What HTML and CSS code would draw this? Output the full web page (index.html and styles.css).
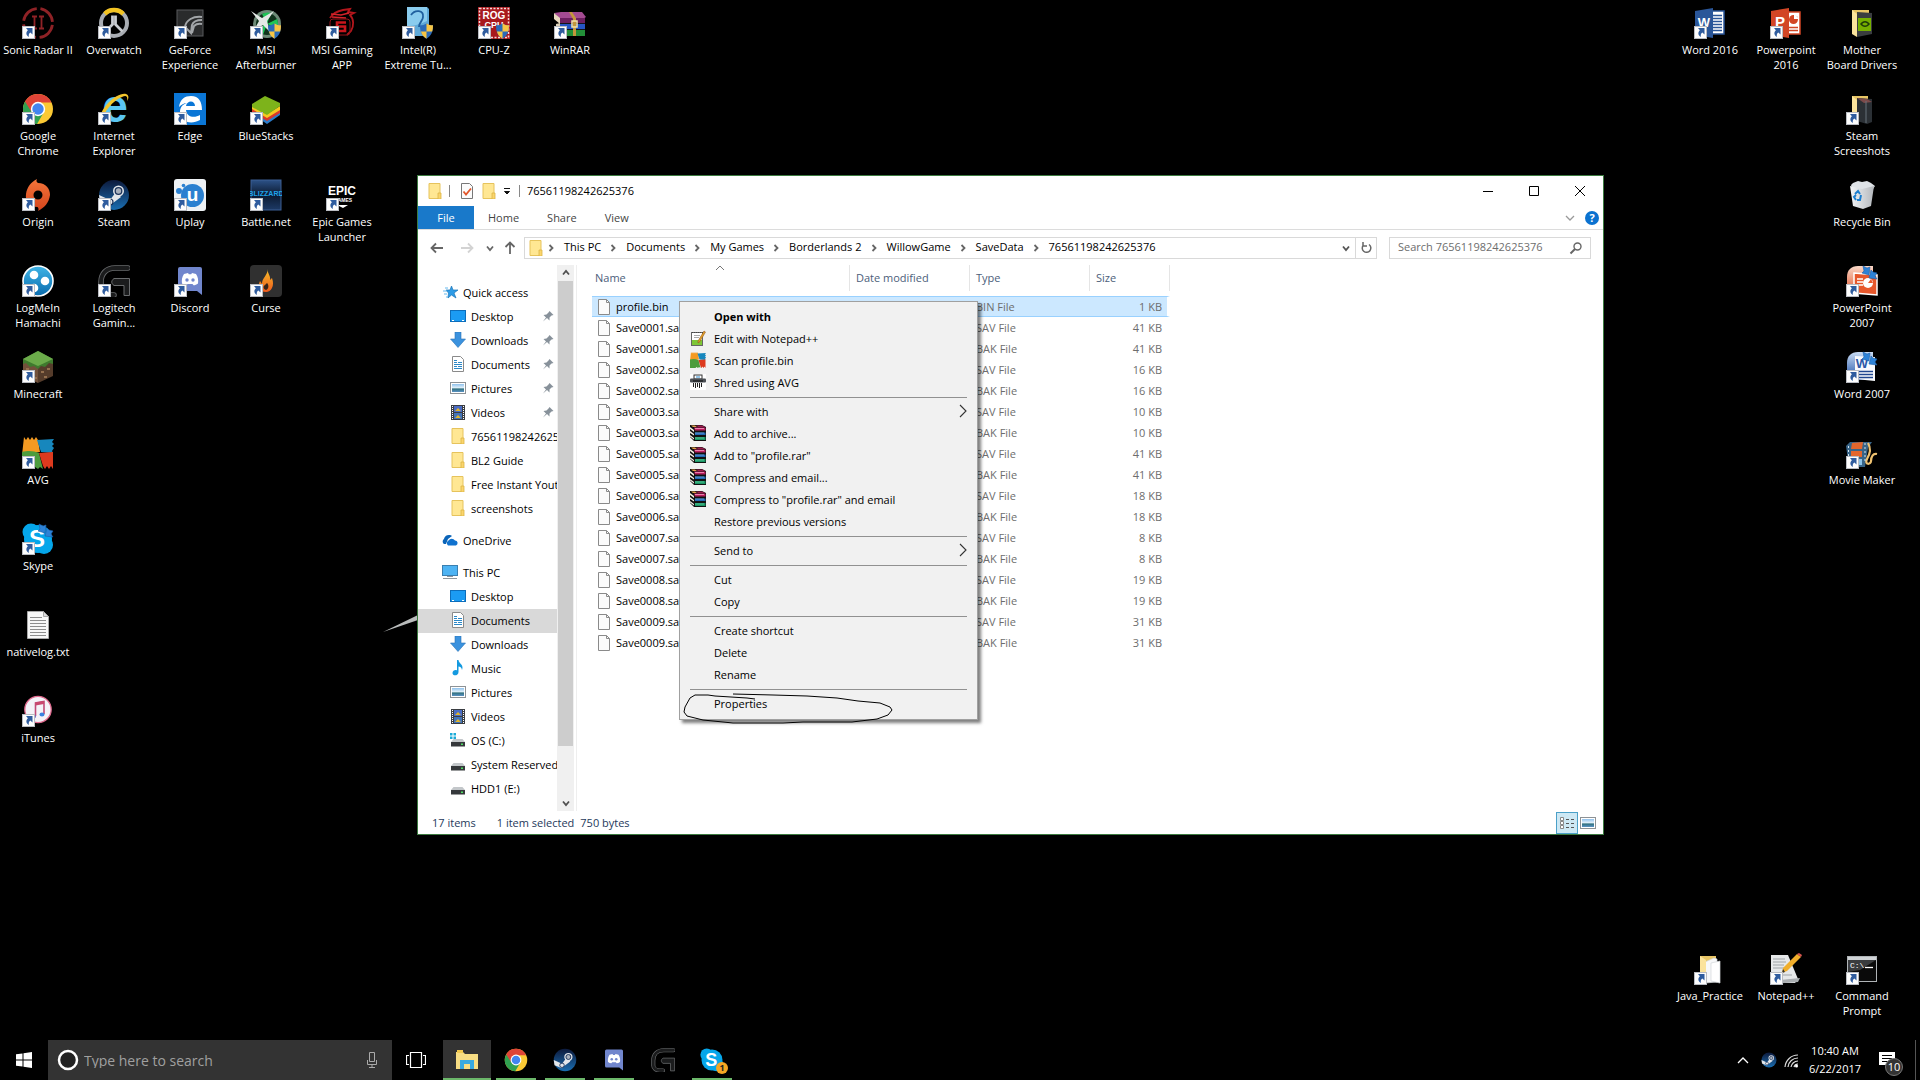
FILE: index.html
```
<!DOCTYPE html>
<html lang="en">

<head>
  <meta charset="UTF-8">
  <meta name="viewport" content="width=device-width, initial-scale=1.0">
  <title>Desktop</title>
  <link rel="stylesheet" href="styles.css">
</head>

<body>
  <!-- icon sprites -->
  <svg class="sprites" width="0" height="0" aria-hidden="true">
    <defs>
      <linearGradient id="g-steam" x1="0" y1="0" x2="0" y2="1"><stop offset="0" stop-color="#0d1a3c"/><stop offset="1" stop-color="#1a6db0"/></linearGradient>
      <linearGradient id="g-blizz" x1="0" y1="0" x2="0" y2="1"><stop offset="0" stop-color="#2c5288"/><stop offset=".5" stop-color="#0c1a30"/><stop offset="1" stop-color="#1d3a66"/></linearGradient>
      <linearGradient id="g-origin" x1="0" y1="0" x2="0" y2="1"><stop offset="0" stop-color="#f4753a"/><stop offset="1" stop-color="#d4451c"/></linearGradient>
      <linearGradient id="g-hamachi" x1="0" y1="0" x2="0" y2="1"><stop offset="0" stop-color="#3fb4e6"/><stop offset="1" stop-color="#0a6cae"/></linearGradient>
      <linearGradient id="g-flame" x1="0" y1="0" x2="0" y2="1"><stop offset="0" stop-color="#f7c02a"/><stop offset="1" stop-color="#ee5a1c"/></linearGradient>
      <linearGradient id="g-bin" x1="0" y1="0" x2="1" y2="0"><stop offset="0" stop-color="#f4f6f8"/><stop offset="1" stop-color="#b4b8bd"/></linearGradient>
      <linearGradient id="g-sky" x1="0" y1="0" x2="0" y2="1"><stop offset="0" stop-color="#8fc1ec"/><stop offset=".5" stop-color="#e6f3fb"/><stop offset=".6" stop-color="#2e6f7c"/><stop offset="1" stop-color="#5b93c4"/></linearGradient>
      <linearGradient id="g-word07" x1="0" y1="0" x2="0" y2="1"><stop offset="0" stop-color="#c9dcf4"/><stop offset="1" stop-color="#1c4fa5"/></linearGradient>
      <linearGradient id="g-ppt07" x1="0" y1="0" x2="0" y2="1"><stop offset="0" stop-color="#f9d8c8"/><stop offset="1" stop-color="#e0532a"/></linearGradient>
    </defs>

    <symbol id="badge" viewBox="0 0 32 32">
      <rect x=".5" y="19.500" width="12" height="12" fill="#fdfdfd" stroke="#b9bcc2"/>
      <path d="M4 21h6.500v6.500l-2.100-2.100c-1.500 1-1.900 2.400-1.500 4.600-3-1.700-3.300-4.700-1-6.800z" fill="#2f5c9e"/>
    </symbol>
    <symbol id="shield" viewBox="0 0 32 32">
      <path d="M24.500 16.500c2 1.300 4 1.800 6.500 1.800 0 6-1.500 10.700-6.500 13.400-5-2.700-6.500-7.400-6.500-13.400 2.500 0 4.500-.5 6.500-1.800z" fill="#2a6ab8"/>
      <path d="M24.500 16.500c2 1.300 4 1.800 6.500 1.800 0 2.400-.2 4.500-.8 6.300h-5.700zM24.500 31.700c-2.900-1.600-4.700-3.900-5.600-7.100h5.600z" fill="#f7c544"/>
    </symbol>

    <symbol id="sonic" viewBox="0 0 32 32">
      <circle cx="16" cy="16" r="14.500" fill="none" stroke="#8f2226" stroke-width="2.800" stroke-dasharray="19 3.800" stroke-dashoffset="-2"/>
      <path d="M10 9.500h5M10 21.500h5M12.500 9.500v12M17 9.500h5M17 21.500h5M19.500 9.500v12" stroke="#8f2226" stroke-width="1.800" fill="none"/>
    </symbol>
    <symbol id="overwatch" viewBox="0 0 32 32">
      <circle cx="16" cy="16" r="13" fill="none" stroke="#a9adb3" stroke-width="4"/>
      <path d="M6.800 6.800a13 13 0 0 1 18.400 0" fill="none" stroke="#f3c321" stroke-width="4.500"/>
      <path d="M14.500 8.500v9l-7 7M17.500 8.500v9l7 7" fill="none" stroke="#c9ccd1" stroke-width="2.800"/>
    </symbol>
    <symbol id="geforce" viewBox="0 0 32 32">
      <rect x="3" y="3" width="26" height="26" fill="#2a2b2c" stroke="#595b5d"/>
      <path d="M28 10c-9-1-16 3-17 10l6 6 1-8c1-3 5-5 10-5M18 26l2-7c2-2 5-2.500 8-2" fill="none" stroke="#a2a5a8" stroke-width="2"/>
    </symbol>
    <symbol id="afterburner" viewBox="0 0 32 32">
      <circle cx="17" cy="17" r="14" fill="#6e8a78"/>
      <circle cx="17" cy="17" r="11" fill="#10331c"/>
      <path d="M17 17l-5-10a11 11 0 0 1 9-1zM17 17l10-5a11 11 0 0 1 0 9zM17 17l-10 4a11 11 0 0 0 6 7z" fill="#1fc557"/>
      <path d="M1 4l11 7 12-7-7 10 3 11-7-7-9 5 5-9z" fill="#e4e9e6"/>
    </symbol>
    <symbol id="msiapp" viewBox="0 0 32 32">
      <path d="M4 11c3-5 8-7 13-8l7-1-2 3 6 1-4 2c4 4 4 11 1 16l-4 4" fill="none" stroke="#b3161c" stroke-width="1.800"/>
      <path d="M5 7l10 1 8-2M6 10l14 1" stroke="#d6232a" stroke-width="1.500" fill="none"/>
      <path d="M20 15.500h-9v4h8V24H8" fill="none" stroke="#c8161d" stroke-width="2.600"/>
      <rect x="4" y="12" width="20" height="16" rx="3" fill="none" stroke="#95141a"/>
    </symbol>
    <symbol id="intel" viewBox="0 0 32 32">
      <path d="M5 0h20l2 2v25l-2 2H5z" fill="#5fa9d8"/>
      <path d="M5 0h20v14c-8 4-14 5-20 5z" fill="#8accee"/>
      <path d="M9 8c4-6 13-5 12 2 0 4-4 5-4 10" fill="none" stroke="#1f5f9e" stroke-width="1.800"/>
    </symbol>
    <symbol id="winrar" viewBox="0 0 32 32">
      <path d="M0 6l7-1h21l4 5-3 2H6z" fill="#a44b92"/>
      <path d="M0 6l6 5v6l-6-5z" fill="#e9d9bf"/>
      <path d="M6 11h25v5H6z" fill="#6d1f60"/>
      <path d="M3 17h28v5H3z" fill="#2555c4"/>
      <path d="M3 23h28v6H5z" fill="#228f38"/>
      <path d="M6 16h25v1H6zM6 22h25v1H6z" fill="#14141c"/>
      <path d="M2 17v11l4 2V16z" fill="#dcd0b8"/>
      <path d="M18 5l4 6v18h-3V12l-4-7z" fill="#c4973c"/>
      <rect x="18" y="14" width="5" height="6" fill="none" stroke="#f6e6a8" stroke-width="1.500"/>
    </symbol>
    <symbol id="chrome" viewBox="0 0 32 32">
      <circle cx="16" cy="16" r="15" fill="#fbc934"/>
      <path d="M16 16L3 8.500A15 15 0 0 0 15 31l7-12z" fill="#30a150"/>
      <path d="M3 8.500A15 15 0 0 1 29.500 9.500H16A7 7 0 0 0 9.500 19z" fill="#df4437"/>
      <circle cx="16" cy="16" r="7.200" fill="#fff"/>
      <circle cx="16" cy="16" r="5.700" fill="#4285f0"/>
    </symbol>
    <symbol id="edge" viewBox="0 0 32 32">
      <rect width="32" height="32" fill="#0a76d6"/>
      <path d="M5 14C6 6 11 3 17 3c8 0 11 6 11 14H12c1 8 9 8 14 5v5c-9 5-20 2-20-8 0-5 3-8 7-9-3 0-6 2-8 4zm7-1h9c0-6-8-6-9 0z" fill="#fff"/>
    </symbol>
    <symbol id="bluestacks" viewBox="0 0 32 32">
      <path d="M2 18l15 9 13-8v3L17 31 2 21z" fill="#2a7bc9"/>
      <path d="M2 15l15 9 13-8v4l-13 8L2 19z" fill="#d93a2b"/>
      <path d="M2 12l15 9 13-8v4l-13 8L2 16z" fill="#f6c921"/>
      <path d="M2 11L15 3l15 7v3l-13 9L2 14z" fill="#7db31b"/>
    </symbol>
    <symbol id="origin" viewBox="0 0 32 32">
      <path d="M15 0c-1 2-.500 3 1 4 8 0 12 6 12 12-1 8-6 13-12 16 1-2 .5-3-.5-4C7 28 3 22 4 15 5 8 9 3 15 0zm1 11.500a4.500 4.500 0 1 0 0 9 4.500 4.500 0 0 0 0-9z" fill="url(#g-origin)" fill-rule="evenodd"/>
    </symbol>
    <symbol id="steam" viewBox="0 0 32 32">
      <circle cx="16" cy="16" r="15" fill="url(#g-steam)"/>
      <path d="M1 16l11 5 6-8 5 5-8 6-3 3-10-4z" fill="#e3e6ea"/>
      <circle cx="20.500" cy="12" r="5.500" fill="#e3e6ea"/>
      <circle cx="20.500" cy="12" r="3.300" fill="#a9b1bd" stroke="#1c335b" stroke-width="1.300"/>
      <circle cx="12" cy="23" r="3" fill="none" stroke="#1c335b" stroke-width="1.200"/>
    </symbol>
    <symbol id="hamachi" viewBox="0 0 32 32">
      <circle cx="16" cy="16" r="15" fill="url(#g-hamachi)" stroke="#fff" stroke-width="1.600"/>
      <circle cx="12" cy="10" r="4.300" fill="#fff"/><circle cx="23" cy="16" r="4.300" fill="#fff"/><circle cx="12" cy="23" r="4.300" fill="#fff"/>
    </symbol>
    <symbol id="logitech" viewBox="0 0 32 32">
      <path d="M30 3H17C8 3 3 9 3 17v6c0 4 4 7 9 7h4" fill="none" stroke="#6a6c6e" stroke-width="5.500" stroke-linecap="round"/>
      <path d="M30 3H17C8 3 3 9 3 17v6c0 4 4 7 9 7h4" fill="none" stroke="#1b1c1d" stroke-width="3.800" stroke-linecap="round"/>
      <path d="M16 13.500h15.500v17h-5.500v-10h-10c-3-2-3-5 0-7z" fill="#1b1c1d" stroke="#6a6c6e"/>
    </symbol>
    <symbol id="discord" viewBox="0 0 32 32">
      <path d="M6 2h20a2 2 0 0 1 2 2v26l-5-4H6a2 2 0 0 1-2-2V4a2 2 0 0 1 2-2z" fill="#7186cd"/>
      <path d="M10 9l4-1 .8 1.200h2.400L18 8l4 1c2 3 2.500 6 2 9.500-1.500 1.200-3 1.800-4.500 1.800L18.500 19h-5l-1 1.300c-1.500 0-3-.6-4.500-1.800C7.500 15 8 12 10 9z" fill="#fff"/>
      <circle cx="13" cy="15" r="1.700" fill="#7186cd"/><circle cx="19" cy="15" r="1.700" fill="#7186cd"/>
    </symbol>
    <symbol id="curse" viewBox="0 0 32 32">
      <rect width="32" height="32" rx="4" fill="#303030"/>
      <path d="M18 4c-1 5 3 6 2 11l2-2c3 8-1 14-6 14-6 0-9-5-6-11l2 3c0-6 5-8 6-15z" fill="url(#g-flame)"/>
      <path d="M17 18c2 2 2 6-1 7-3-1-3-4-1-5z" fill="#37251a"/>
    </symbol>
    <symbol id="minecraft" viewBox="0 0 32 32">
      <path d="M1 8l15 6v18L1 25z" fill="#71513b"/>
      <path d="M31 8l-15 6v18l15-7z" fill="#553c2b"/>
      <path d="M16 0l15 8v5l-4-1-4 4-4-1-3 3-4-3-4 1-4-4-3 1V8z" fill="#3f7a2e"/>
      <path d="M16 0l15 8-15 7L1 8z" fill="#6bab4a"/>
      <path d="M4 17h3v2H4zM9 21h3v2H9zM5 24h3v2H5zM19 20h3v2h-3zM25 17h3v2h-3zM22 25h3v2h-3zM13 26h2v2h-2z" fill="#94704f"/>
    </symbol>
    <symbol id="avg" viewBox="0 0 32 32">
      <path d="M2 0l2 3 2-3 2 3 2-3 2 3 2-3 2 3 2 12-9 1-9 2z" fill="#f39a22"/>
      <path d="M15 3l17-1-2 3 2 2-2 2 2 2-2 3 1 2-12-1z" fill="#1787bd"/>
      <path d="M0 15c7-2 12-1 17 1l4 16-3-2-2 2-3-2-2 2H0z" fill="#4d9c3d"/>
      <path d="M17 16l14-1v17l-2-3-2 3-2-3-2 3-2-3z" fill="#dd3a1e"/>
    </symbol>
    <symbol id="skype-cloud" viewBox="0 0 32 32">
      <circle cx="9" cy="9" r="8.500" fill="#05a6ea"/><circle cx="22" cy="22" r="9" fill="#05a6ea"/>
      <circle cx="16" cy="16" r="14" fill="#05a6ea"/>
    </symbol>
    <symbol id="arrows" viewBox="0 0 32 32">
      <path d="M17 1l4 2 3-1-1 8-7-2 2-2zM31 14l-8-1 2-8 2 2 4 1-2 3z" fill="#2d82d6" stroke="#1c5ea8" stroke-width=".6"/>
    </symbol>
    <symbol id="txt" viewBox="0 0 32 32">
      <path d="M5.500 2.500h16l5 5v22h-21z" fill="#f7f7f7" stroke="#a8a8a8"/>
      <path d="M21.500 2.500v5h5z" fill="#dadada" stroke="#a8a8a8"/>
      <path d="M8 8.500h12M8 11.500h16M8 14.500h16M8 17.500h16M8 20.500h16M8 23.500h16M8 26.500h16" stroke="#8d8d8d"/>
    </symbol>
    <symbol id="itunes" viewBox="0 0 32 32">
      <circle cx="16" cy="14.500" r="13.200" fill="#f4f2f8" stroke="#e06a8e" stroke-width="1.300"/>
      <path d="M13.500 21V8L22 6.500V19" fill="none" stroke="#c14a78" stroke-width="1.600"/><path d="M13.500 7.500L22 6v3l-8.500 1.500z" fill="#c9486f"/>
      <ellipse cx="11.500" cy="21.500" rx="2.500" ry="2" fill="#6a66c4"/><ellipse cx="20" cy="19.500" rx="2.500" ry="2" fill="#3a82e0"/>
    </symbol>
    <symbol id="drivers" viewBox="0 0 32 32">
      <path d="M6 3h17v24H6z" fill="#e8c566"/>
      <path d="M11 5l15 1v21l-15 3z" fill="#3a3d40"/>
      <path d="M12 11h13v13H12z" fill="#76b000"/>
      <path d="M14 17c3-4 7-4 10 0-3 4-7 4-10 0zm2 0c2 2 4 2 6 0-2-2-4-2-6 0z" fill="#1e3a08"/>
      <path d="M6 3l5 4v23l-5-3z" fill="#fbe39b"/>
    </symbol>
    <symbol id="shots" viewBox="0 0 32 32">
      <path d="M6 3h16v24H6z" fill="#e8c566"/>
      <path d="M11 5l15 1v23l-5 2-10-3z" fill="#2b3035"/>
      <path d="M11 5l10 1 5 3-8 1z" fill="#7b4a4a"/><path d="M20 8v22" stroke="#66707a"/>
      <path d="M6 3l5 4v23l-5-3z" fill="#fbe39b"/>
    </symbol>
    <symbol id="bin" viewBox="0 0 32 32">
      <path d="M5 6l2-2 5-2 4 1 5-1 4 2 4 3-2 3H6z" fill="#dfe3e7"/>
      <path d="M4 7l12 3 12-3-3 20-8 3-10-3z" fill="url(#g-bin)"/>
      <path d="M9 15l3-3 2 3M15 16l-1 5h-3M10 21l-2-3 2-2" fill="none" stroke="#1c7fd0" stroke-width="2"/>
    </symbol>
    <symbol id="ppt07" viewBox="0 0 32 32">
      <path d="M1 12C1 5 5 1 12 1h15v28H1z" fill="url(#g-ppt07)"/>
      <path d="M8 8l23 2v20L8 28z" fill="#e7582c" stroke="#fff" stroke-width="1.500"/>
      <path d="M11 14h6M11 17h6M11 20h6" stroke="#fff" stroke-width="1.400"/><circle cx="22" cy="18" r="5" fill="#fff"/><path d="M22 18h5l-2-4z" fill="#e7582c"/>
    </symbol>
    <symbol id="movie" viewBox="0 0 32 32">
      <path d="M0 9l4-4h22l-4 6-3 19H3z" fill="#386487"/>
      <path d="M6 6l11-1-1 7H5zM5 14h11v6H5z" fill="#e3662c"/><path d="M5 22h11v6H6z" fill="#8ec4e8"/>
      <path d="M31 17c-4-1-6 3-6 7s-7 4-4-2c3-5 4-11 1-16" fill="none" stroke="#eec170" stroke-width="2.200"/>
      <path d="M2.500 9v18M19 6v20" stroke="#d4e4ef" stroke-dasharray="2 2"/>
    </symbol>
    <symbol id="java" viewBox="0 0 32 32">
      <path d="M6 3h16v26H6z" fill="#e8c566"/>
      <path d="M11 9l9-4 3 1v23l-12 1z" fill="#f7f8f9" stroke="#d3d7da" stroke-width=".7"/>
      <path d="M17 10l9-2v22l-9-2z" fill="#fff" stroke="#d3d7da" stroke-width=".7"/>
      <path d="M6 3l6 4v24l-6-3z" fill="#fbe39b"/>
    </symbol>
    <symbol id="npp" viewBox="0 0 32 32">
      <path d="M1 2h17l10 24-3 4H1z" fill="#e6e8e9"/>
      <path d="M1 28l29-3-2 4-26 2z" fill="#a9adb0"/>
      <path d="M3 6h12M3 9h13M3 12h11M3 15h12M12 22h10" stroke="#9ea3a6"/>
      <path d="M12 20l1-5L27 1l4 3-14 14z" fill="#f0ae2b"/><path d="M27 1l2-1 3 2-1 2z" fill="#d65550"/><path d="M12 20l1-4 2 3z" fill="#333"/>
    </symbol>

    <!-- 16px icons -->
    <symbol id="s-folder" viewBox="0 0 16 16">
      <path d="M2 .5h11v15H2z" fill="#ffe793" stroke="#e6c35c"/><path d="M11 10h3v6h-3z" fill="#fbd56c" stroke="#dcb548" stroke-width=".8"/>
    </symbol>
    <symbol id="s-file" viewBox="0 0 16 16">
      <path d="M2.500.5h8l3 3v12h-11z" fill="#fbfbfb" stroke="#8a8a8a"/><path d="M10.500.5v3h3" fill="none" stroke="#8a8a8a"/>
    </symbol>
    <symbol id="s-check" viewBox="0 0 16 16">
      <path d="M2.500.5h8l3 3v12h-11z" fill="#fbfbfb" stroke="#777"/><path d="M4.500 8.500l2.500 3 5-6" fill="none" stroke="#e2562a" stroke-width="1.800"/>
    </symbol>
    <symbol id="s-star" viewBox="0 0 16 16">
      <path d="M9.500 2l1.500 4h5l-4 3 2 5-4.500-3L6 14l.5-5L4 6h4z" fill="#2d9be6" stroke="#1b76b8" stroke-width=".7"/>
      <path d="M1 7h4M3 4h3M2 10h3M4 13h2" stroke="#64b9ef"/>
    </symbol>
    <symbol id="s-desktop" viewBox="0 0 16 16">
      <rect x=".5" y="2.500" width="15" height="11" fill="#1b9bf3" stroke="#0d6dba"/><path d="M2 12.500h2M12 12.500h2" stroke="#fff"/>
    </symbol>
    <symbol id="s-down" viewBox="0 0 16 16">
      <path d="M5 0h6v7h4.500L8 15.500.500 7H5z" fill="#3b92de" stroke="#2a72b5" stroke-width=".6"/>
    </symbol>
    <symbol id="s-doc" viewBox="0 0 16 16">
      <path d="M2.500.5h8l3 3v12h-11z" fill="#fff" stroke="#8a8a8a"/>
      <path d="M4 4.500h3M4 6.500h3M8 6.500h4M4 8.500h8M4 10.500h3M8 10.500h4M4 12.500h8" stroke="#2b88c8"/>
    </symbol>
    <symbol id="s-pic" viewBox="0 0 16 16">
      <rect x=".5" y="2.500" width="15" height="11" fill="#fff" stroke="#8d9296"/><rect x="2" y="4" width="12" height="8" fill="url(#g-sky)"/>
    </symbol>
    <symbol id="s-video" viewBox="0 0 16 16">
      <rect x="1" y="1" width="14" height="15" fill="#3a3d42"/><rect x="4" y="2" width="8" height="6" fill="#4a6cc4"/><rect x="4" y="9" width="8" height="6" fill="#4374b8"/>
      <path d="M5 7l3-3 3 3zM5 14l3-3 3 3z" fill="#e0b42c"/><path d="M2.500 2v13M13.500 2v13" stroke="#fff" stroke-dasharray="1 1"/>
    </symbol>
    <symbol id="s-pin" viewBox="0 0 16 16">
      <path d="M9.500 3l4 4-2 .5-2 2v3l-2.500-2.500L3 13.500 6 9.500 3.500 7l3-.5 2-2z" fill="#87919a"/>
    </symbol>
    <symbol id="s-cloud" viewBox="0 0 16 16">
      <path d="M2 12a3 3 0 0 1 0-5 5 5 0 0 1 8-3l-4 3-2 5z" fill="#0b64b8"/><path d="M6 13.500a3 3 0 0 1 .5-5 4 4 0 0 1 6.500 0 2.600 2.600 0 0 1 1 5z" fill="#1072cf"/>
    </symbol>
    <symbol id="s-pc" viewBox="0 0 16 16">
      <rect x=".5" y="1.500" width="15" height="10" fill="#4db3f3" stroke="#3a7fb0"/><path d="M1 14.500h14M5 12.500h6" stroke="#8f979d"/>
    </symbol>
    <symbol id="s-music" viewBox="0 0 16 16">
      <path d="M7 0h1.500c.5 4 5.500 4 3.500 10-.5-3-2-3.500-3.500-3.500V12c0 4-6 4.500-6 1 0-2.500 3-3.500 4.500-2.500z" fill="#149ae0"/>
    </symbol>
    <symbol id="s-drive" viewBox="0 0 16 16">
      <path d="M3.500 7h9l2.500 3H1z" fill="#c3c7ca"/><rect x="1" y="10" width="14" height="4.500" fill="#35383b"/><rect x="11" y="11.500" width="2" height="1.500" fill="#4fdc62"/>
    </symbol>
    <symbol id="s-os" viewBox="0 0 16 16">
      <use href="#s-drive"/><path d="M0 1h2.500v2.500H0zM3.500 1H6v2.500H3.500zM0 4.500h2.500V7H0zM3.500 4.500H6V7H3.500z" fill="#1cabd8"/>
    </symbol>
    <symbol id="s-rar" viewBox="0 0 16 16">
      <path d="M0 0h12l4 2v14H4l-4-4z" fill="#111"/>
      <path d="M4 2.500h11.500v3H5z" fill="#b81f5e"/><path d="M5 3.500h9" stroke="#ee7fae"/>
      <path d="M5 7.500h10.500v2.500H5z" fill="#2368b4"/><path d="M5 8h9" stroke="#7cb6ea" stroke-width=".7"/>
      <path d="M5 12h10.500v3H5z" fill="#1a9464"/><path d="M5 13h9" stroke="#6fd8ab" stroke-width=".7"/>
      <path d="M0 2l4 3v2L0 4zM0 6l4 3v1.500L0 8zM0 10l4 3v1.500l-4-3z" fill="#f5f0e6"/><path d="M1 .5h4l2 1.500H3z" fill="#e3a04c"/><path d="M6 .5h6l3 1.500H8z" fill="#9c1c4e"/>
    </symbol>
    <symbol id="s-npp" viewBox="0 0 16 16">
      <rect x="1.500" y="2.500" width="11" height="13" fill="#fff" stroke="#666"/><rect x="2" y="10" width="10" height="5" fill="#7ec636"/>
      <path d="M2 2.500h11" stroke="#444" stroke-dasharray="1 1"/><path d="M4 5.500h6M4 7.500h5" stroke="#aaa"/><path d="M8 11l6-10 1.500 1L10 11.500 8 13z" fill="#e0a128" stroke="#8c4a1c" stroke-width=".5"/>
    </symbol>
    <symbol id="s-shred" viewBox="0 0 16 16">
      <rect width="16" height="16" fill="#fff"/><rect x="4" y="1" width="8" height="4" fill="#fff" stroke="#333"/><path d="M6 3h4" stroke="#2b8bd0"/>
      <rect x="0" y="4.500" width="16" height="4" rx="1" fill="#4b4f54"/><path d="M3 7h10" stroke="#111"/>
      <path d="M3.500 9v4M5.500 9v5M7.500 9v4M9.500 9v5M11.500 9v4" stroke="#222"/>
    </symbol>
    <symbol id="s-left" viewBox="0 0 16 16"><path d="M14 8H3M7 3.500L2.500 8 7 12.500" fill="none" stroke="currentColor" stroke-width="1.800"/></symbol>
    <symbol id="s-chev" viewBox="0 0 16 16"><path d="M6 5l3 3-3 3" fill="none" stroke="#666" stroke-width="1.800"/></symbol>
    <symbol id="s-vee" viewBox="0 0 16 16"><path d="M5 6.500l3 3.500 3-3.500" fill="none" stroke="currentColor" stroke-width="1.800"/></symbol>
    <symbol id="s-sub" viewBox="0 0 16 16"><path d="M5 2l6 6-6 6" fill="none" stroke="#333" stroke-width="1.100"/></symbol>
  </svg>

  <main class="desktop">
    <div class="shortcuts">
      <div class="shortcut-row">
        <a class="shortcut" href="#"><svg><use href="#sonic"/><use href="#badge"/></svg>Sonic Radar II</a>
        <a class="shortcut" href="#"><svg><use href="#overwatch"/><use href="#badge"/></svg>Overwatch</a>
        <a class="shortcut" href="#"><svg><use href="#geforce"/><use href="#badge"/></svg>GeForce<br>Experience</a>
        <a class="shortcut" href="#"><svg><use href="#afterburner"/><use href="#badge"/><use href="#shield"/></svg>MSI<br>Afterburner</a>
        <a class="shortcut" href="#"><svg><use href="#msiapp"/><use href="#badge"/></svg>MSI Gaming<br>APP</a>
        <a class="shortcut" href="#"><svg><use href="#intel"/><use href="#badge"/><use href="#shield"/></svg>Intel(R)<br>Extreme Tu...</a>
        <a class="shortcut" href="#">
          <svg viewBox="0 0 32 32">
            <rect width="32" height="32" fill="#a8191d"/>
            <rect x="1.500" y="1.500" width="29" height="29" fill="none" stroke="#f3dada" stroke-width="1.500" stroke-dasharray="2 1.500"/>
            <text x="16" y="12" class="logo-text" font-size="10" fill="#fff" text-anchor="middle">ROG</text>
            <text x="16" y="21" class="logo-text" font-size="9" fill="#fff" text-anchor="middle">CPU</text>
            <use href="#badge"/><use href="#shield"/>
          </svg>CPU-Z</a>
        <a class="shortcut" href="#"><svg><use href="#winrar"/><use href="#badge"/></svg>WinRAR</a>
      </div>
      <div class="shortcut-row">
        <a class="shortcut" href="#"><svg><use href="#chrome"/><use href="#badge"/></svg>Google<br>Chrome</a>
        <a class="shortcut" href="#">
          <svg viewBox="0 0 32 32">
            <text x="17" y="29" class="logo-text" font-size="46" fill="#5ac6f2" text-anchor="middle">e</text>
            <path d="M3 29C-2 20 17-1 28 1c3 1 3 4 1 7 1-5-1-6-5-4C14 8 6 19 3 29z" fill="#f3c52c"/>
            <use href="#badge"/>
          </svg>Internet<br>Explorer</a>
        <a class="shortcut" href="#"><svg><use href="#edge"/><use href="#badge"/></svg>Edge</a>
        <a class="shortcut" href="#"><svg><use href="#bluestacks"/><use href="#badge"/></svg>BlueStacks</a>
      </div>
      <div class="shortcut-row">
        <a class="shortcut" href="#"><svg><use href="#origin"/><use href="#badge"/></svg>Origin</a>
        <a class="shortcut" href="#"><svg><use href="#steam"/><use href="#badge"/></svg>Steam</a>
        <a class="shortcut" href="#">
          <svg viewBox="0 0 32 32">
            <rect width="32" height="32" rx="3" fill="#eef2f5"/>
            <circle cx="18.500" cy="16.500" r="11.500" fill="#2a80d0"/>
            <circle cx="5" cy="12" r="3" fill="#2a80d0"/><circle cx="9.500" cy="6.500" r="1.800" fill="#2a80d0"/>
            <text x="18.500" y="22" class="logo-text" font-size="19" fill="#fff" text-anchor="middle">u</text>
            <use href="#badge"/>
          </svg>Uplay</a>
        <a class="shortcut" href="#">
          <svg viewBox="0 0 32 32">
            <rect x="1" y="1" width="30" height="30" fill="url(#g-blizz)" stroke="#3c5e93"/>
            <text x="16" y="17" class="narrow-text" font-size="7" fill="#1fa3ec" text-anchor="middle">BLIZZARD</text>
            <use href="#badge"/>
          </svg>Battle.net</a>
        <a class="shortcut" href="#">
          <svg viewBox="0 0 32 32">
            <text x="16" y="16" class="narrow-text" font-size="12" fill="#fff" text-anchor="middle">EPIC</text>
            <text x="17" y="23" class="logo-text" font-size="5" fill="#fff" text-anchor="middle">GAMES</text>
            <path d="M11 26h11l-5 3z" fill="#fff"/>
            <use href="#badge"/>
          </svg>Epic Games<br>Launcher</a>
      </div>
      <div class="shortcut-row">
        <a class="shortcut" href="#"><svg><use href="#hamachi"/><use href="#badge"/></svg>LogMeIn<br>Hamachi</a>
        <a class="shortcut" href="#"><svg><use href="#logitech"/><use href="#badge"/></svg>Logitech<br>Gamin...</a>
        <a class="shortcut" href="#"><svg><use href="#discord"/><use href="#badge"/></svg>Discord</a>
        <a class="shortcut" href="#"><svg><use href="#curse"/><use href="#badge"/></svg>Curse</a>
      </div>
      <div class="shortcut-row"><a class="shortcut" href="#"><svg><use href="#minecraft"/><use href="#badge"/></svg>Minecraft</a></div>
      <div class="shortcut-row"><a class="shortcut" href="#"><svg><use href="#avg"/><use href="#badge"/></svg>AVG</a></div>
      <div class="shortcut-row">
        <a class="shortcut" href="#">
          <svg viewBox="0 0 32 32">
            <use href="#skype-cloud"/>
            <text x="15" y="24" class="logo-text" font-size="24" fill="#fff" text-anchor="middle">S</text>
            <use href="#arrows"/><use href="#badge"/>
          </svg>Skype</a>
      </div>
      <div class="shortcut-row"><a class="shortcut" href="#"><svg><use href="#txt"/></svg>nativelog.txt</a></div>
      <div class="shortcut-row"><a class="shortcut" href="#"><svg><use href="#itunes"/><use href="#badge"/></svg>iTunes</a></div>
    </div>

    <div class="shortcuts shortcuts-right">
      <div class="shortcut-row">
        <a class="shortcut" href="#">
          <svg viewBox="0 0 32 32">
            <path d="M18 4h12v23H18z" fill="#fff" stroke="#2a5699" stroke-width="1.500"/>
            <path d="M19 8.500h9M19 11.500h9M19 14.500h9M19 17.500h9M19 20.500h9M19 23.500h9" stroke="#2a5699" stroke-width="1.400"/>
            <path d="M1 4l18-3v30L1 28z" fill="#2a5699"/>
            <text x="10" y="20" class="logo-text" font-size="13" fill="#fff" text-anchor="middle">W</text>
            <use href="#badge"/>
          </svg>Word 2016</a>
        <a class="shortcut" href="#">
          <svg viewBox="0 0 32 32">
            <path d="M18 5h12v22H18z" fill="#fff" stroke="#d24625" stroke-width="1.500"/>
            <path d="M19 20.500h9M19 23.500h9" stroke="#d24625" stroke-width="1.400"/>
            <circle cx="23.500" cy="12.500" r="4.500" fill="#d24625"/><path d="M24 12V6l5 6z" fill="#fff"/>
            <path d="M1 4l18-3v30L1 28z" fill="#d24625"/>
            <text x="10" y="20" class="logo-text" font-size="15" fill="#fff" text-anchor="middle">P</text>
            <use href="#badge"/>
          </svg>Powerpoint<br>2016</a>
        <a class="shortcut" href="#"><svg><use href="#drivers"/></svg>Mother<br>Board Drivers</a>
      </div>
      <div class="shortcut-row"><a class="shortcut" href="#"><svg><use href="#shots"/><use href="#badge"/></svg>Steam<br>Screeshots</a></div>
      <div class="shortcut-row"><a class="shortcut" href="#"><svg><use href="#bin"/></svg>Recycle Bin</a></div>
      <div class="shortcut-row"><a class="shortcut" href="#"><svg><use href="#ppt07"/><use href="#arrows"/><use href="#badge"/></svg>PowerPoint<br>2007</a></div>
      <div class="shortcut-row">
        <a class="shortcut" href="#">
          <svg viewBox="0 0 32 32">
            <path d="M1 12C1 5 5 1 12 1h15v28H1z" fill="url(#g-word07)"/>
            <path d="M9 5l20 1v24L9 28z" fill="#f8fafd"/>
            <text x="16" y="17" class="logo-text" font-size="13" fill="#2b58a8" text-anchor="middle">W</text>
            <path d="M12 20.500h15M12 23.500h15M12 26.500h15" stroke="#1f4690" stroke-width="1.500"/>
            <use href="#arrows"/><use href="#badge"/>
          </svg>Word 2007</a>
      </div>
      <div class="shortcut-row"><a class="shortcut" href="#"><svg><use href="#movie"/><use href="#badge"/></svg>Movie Maker</a></div>
      <div class="shortcut-row last-row">
        <a class="shortcut" href="#"><svg><use href="#java"/><use href="#badge"/></svg>Java_Practice</a>
        <a class="shortcut" href="#"><svg><use href="#npp"/><use href="#badge"/></svg>Notepad++</a>
        <a class="shortcut" href="#">
          <svg viewBox="0 0 32 32">
            <rect x="1.500" y="3.500" width="29" height="25" fill="#0a0a0a" stroke="#b0b4b7"/>
            <path d="M2 4h28v3H2z" fill="#cfd3d6"/>
            <path d="M2 7h28L14 17 2 19z" fill="#3a3c3e"/>
            <text x="4" y="15" class="mono-text" font-size="8" fill="#fff">C:\</text>
            <path d="M19 14.500h8" stroke="#fff" stroke-width="1.300"/>
            <use href="#badge"/>
          </svg>Command<br>Prompt</a>
      </div>
    </div>

    <!-- wallpaper streak -->
    <svg class="streak" viewBox="0 0 36 18"><path d="M1 17L36 0v5z" fill="#b9bcbc"/></svg>

    <section class="window">
      <div class="titlebar">
        <svg class="ico"><use href="#s-folder"/></svg>
        <span class="bar"></span>
        <svg class="ico"><use href="#s-check"/></svg>
        <svg class="ico"><use href="#s-folder"/></svg>
        <svg class="quick-drop" viewBox="0 0 8 8"><path d="M1 1.500h6M1.500 4.500h5L4 7z" stroke="#111" fill="#111"/></svg>
        <span class="bar"></span>
        <span class="title">76561198242625376</span>
        <div class="caption">
          <button aria-label="Minimize"><svg viewBox="0 0 10 10"><path d="M0 5.500h10"/></svg></button>
          <button aria-label="Maximize"><svg viewBox="0 0 10 10"><path d="M.5.5h9v9h-9z"/></svg></button>
          <button aria-label="Close"><svg viewBox="0 0 10 10"><path d="M0 0l10 10M10 0L0 10"/></svg></button>
        </div>
      </div>

      <div class="ribbon">
        <button class="tab tab-file">File</button>
        <button class="tab">Home</button>
        <button class="tab">Share</button>
        <button class="tab">View</button>
        <svg class="ribbon-drop" viewBox="0 0 10 10"><path d="M1 3l4 4 4-4" fill="none" stroke="#999" stroke-width="1.300"/></svg>
        <button class="help" aria-label="Help">?</button>
      </div>

      <div class="address-row">
        <button class="go" aria-label="Back"><svg class="ico"><use href="#s-left"/></svg></button>
        <button class="go go-off" aria-label="Forward"><svg class="ico flip"><use href="#s-left"/></svg></button>
        <button class="go go-small" aria-label="Recent"><svg class="ico"><use href="#s-vee"/></svg></button>
        <button class="go go-up" aria-label="Up"><svg class="ico up"><use href="#s-left"/></svg></button>
        <div class="address">
          <svg class="ico"><use href="#s-folder"/></svg>
          <svg class="chev"><use href="#s-chev"/></svg><a href="#">This PC</a>
          <svg class="chev"><use href="#s-chev"/></svg><a href="#">Documents</a>
          <svg class="chev"><use href="#s-chev"/></svg><a href="#">My Games</a>
          <svg class="chev"><use href="#s-chev"/></svg><a href="#">Borderlands 2</a>
          <svg class="chev"><use href="#s-chev"/></svg><a href="#">WillowGame</a>
          <svg class="chev"><use href="#s-chev"/></svg><a href="#">SaveData</a>
          <svg class="chev"><use href="#s-chev"/></svg><a href="#">76561198242625376</a>
          <button class="addr-drop" aria-label="Previous locations"><svg class="ico"><use href="#s-vee"/></svg></button>
          <button class="refresh" aria-label="Refresh"><svg class="ico" viewBox="0 0 16 16"><path d="M11 4.500A4.300 4.300 0 1 1 5.500 5M5 2v4h4" fill="none" stroke="#666" stroke-width="1.500"/></svg></button>
        </div>
        <div class="search">
          <input type="text" aria-label="Search folder" placeholder="Search 76561198242625376">
          <svg class="ico" viewBox="0 0 16 16"><circle cx="9.500" cy="6.500" r="3.500" fill="none" stroke="#666" stroke-width="1.400"/><path d="M7 9l-4.500 4.500" stroke="#666" stroke-width="2"/></svg>
        </div>
      </div>

      <div class="panes">
        <nav class="tree">
          <a class="root" href="#"><svg class="ico"><use href="#s-star"/></svg>Quick access</a>
          <a href="#"><svg class="ico"><use href="#s-desktop"/></svg>Desktop<svg class="pin"><use href="#s-pin"/></svg></a>
          <a href="#"><svg class="ico"><use href="#s-down"/></svg>Downloads<svg class="pin"><use href="#s-pin"/></svg></a>
          <a href="#"><svg class="ico"><use href="#s-doc"/></svg>Documents<svg class="pin"><use href="#s-pin"/></svg></a>
          <a href="#"><svg class="ico"><use href="#s-pic"/></svg>Pictures<svg class="pin"><use href="#s-pin"/></svg></a>
          <a href="#"><svg class="ico"><use href="#s-video"/></svg>Videos<svg class="pin"><use href="#s-pin"/></svg></a>
          <a href="#"><svg class="ico"><use href="#s-folder"/></svg>76561198242625376</a>
          <a href="#"><svg class="ico"><use href="#s-folder"/></svg>BL2 Guide</a>
          <a href="#"><svg class="ico"><use href="#s-folder"/></svg>Free Instant Youtube</a>
          <a href="#"><svg class="ico"><use href="#s-folder"/></svg>screenshots</a>
          <a class="root spaced" href="#"><svg class="ico"><use href="#s-cloud"/></svg>OneDrive</a>
          <a class="root spaced" href="#"><svg class="ico"><use href="#s-pc"/></svg>This PC</a>
          <a href="#"><svg class="ico"><use href="#s-desktop"/></svg>Desktop</a>
          <a class="current" href="#"><svg class="ico"><use href="#s-doc"/></svg>Documents</a>
          <a href="#"><svg class="ico"><use href="#s-down"/></svg>Downloads</a>
          <a href="#"><svg class="ico"><use href="#s-music"/></svg>Music</a>
          <a href="#"><svg class="ico"><use href="#s-pic"/></svg>Pictures</a>
          <a href="#"><svg class="ico"><use href="#s-video"/></svg>Videos</a>
          <a href="#"><svg class="ico"><use href="#s-os"/></svg>OS (C:)</a>
          <a href="#"><svg class="ico"><use href="#s-drive"/></svg>System Reserved</a>
          <a href="#"><svg class="ico"><use href="#s-drive"/></svg>HDD1 (E:)</a>
        </nav>
        <div class="scrollbar">
          <svg class="ico up-vee"><use href="#s-vee"/></svg>
          <div class="thumb"></div>
          <svg class="ico"><use href="#s-vee"/></svg>
        </div>
        <div class="files">
          <table>
            <colgroup><col class="col-name"><col class="col-date"><col class="col-type"><col class="col-size"></colgroup>
            <thead>
              <tr>
                <th>Name<svg class="sort" viewBox="0 0 10 6"><path d="M1 5l4-4 4 4" fill="none" stroke="#777"/></svg></th>
                <th>Date modified</th>
                <th>Type</th>
                <th>Size</th>
              </tr>
            </thead>
            <tbody>
              <tr class="selected"><td><svg class="ico"><use href="#s-file"/></svg>profile.bin</td><td></td><td>BIN File</td><td>1 KB</td></tr>
              <tr><td><svg class="ico"><use href="#s-file"/></svg>Save0001.sav</td><td></td><td>SAV File</td><td>41 KB</td></tr>
              <tr><td><svg class="ico"><use href="#s-file"/></svg>Save0001.sav.bak</td><td></td><td>BAK File</td><td>41 KB</td></tr>
              <tr><td><svg class="ico"><use href="#s-file"/></svg>Save0002.sav</td><td></td><td>SAV File</td><td>16 KB</td></tr>
              <tr><td><svg class="ico"><use href="#s-file"/></svg>Save0002.sav.bak</td><td></td><td>BAK File</td><td>16 KB</td></tr>
              <tr><td><svg class="ico"><use href="#s-file"/></svg>Save0003.sav</td><td></td><td>SAV File</td><td>10 KB</td></tr>
              <tr><td><svg class="ico"><use href="#s-file"/></svg>Save0003.sav.bak</td><td></td><td>BAK File</td><td>10 KB</td></tr>
              <tr><td><svg class="ico"><use href="#s-file"/></svg>Save0005.sav</td><td></td><td>SAV File</td><td>41 KB</td></tr>
              <tr><td><svg class="ico"><use href="#s-file"/></svg>Save0005.sav.bak</td><td></td><td>BAK File</td><td>41 KB</td></tr>
              <tr><td><svg class="ico"><use href="#s-file"/></svg>Save0006.sav</td><td></td><td>SAV File</td><td>18 KB</td></tr>
              <tr><td><svg class="ico"><use href="#s-file"/></svg>Save0006.sav.bak</td><td></td><td>BAK File</td><td>18 KB</td></tr>
              <tr><td><svg class="ico"><use href="#s-file"/></svg>Save0007.sav</td><td></td><td>SAV File</td><td>8 KB</td></tr>
              <tr><td><svg class="ico"><use href="#s-file"/></svg>Save0007.sav.bak</td><td></td><td>BAK File</td><td>8 KB</td></tr>
              <tr><td><svg class="ico"><use href="#s-file"/></svg>Save0008.sav</td><td></td><td>SAV File</td><td>19 KB</td></tr>
              <tr><td><svg class="ico"><use href="#s-file"/></svg>Save0008.sav.bak</td><td></td><td>BAK File</td><td>19 KB</td></tr>
              <tr><td><svg class="ico"><use href="#s-file"/></svg>Save0009.sav</td><td></td><td>SAV File</td><td>31 KB</td></tr>
              <tr><td><svg class="ico"><use href="#s-file"/></svg>Save0009.sav.bak</td><td></td><td>BAK File</td><td>31 KB</td></tr>
            </tbody>
          </table>
        </div>
      </div>

      <div class="status">
        <span class="count">17 items</span>
        <span>1 item selected</span>
        <span>750 bytes</span>
        <div class="views">
          <button class="view view-on" aria-label="Details"><svg class="ico" viewBox="0 0 16 16"><path d="M1.500 2.500h3v3h-3zM1.500 6.500h3v3h-3zM1.500 10.500h3v3h-3z" fill="#fff" stroke="#888"/><path d="M7 4.500h3M12 4.500h3M7 8.500h3M12 8.500h3M7 12.500h3M12 12.500h3" stroke="#555"/></svg></button>
          <button class="view" aria-label="Large icons"><svg class="ico"><use href="#s-pic"/></svg></button>
        </div>
      </div>
    </section>

    <div class="menu">
      <button><span class="slot"></span><b>Open with</b></button>
      <button><svg class="ico"><use href="#s-npp"/></svg>Edit with Notepad++</button>
      <button><svg class="ico"><use href="#avg"/></svg>Scan profile.bin</button>
      <button><svg class="ico"><use href="#s-shred"/></svg>Shred using AVG</button>
      <hr>
      <button><span class="slot"></span>Share with<svg class="sub"><use href="#s-sub"/></svg></button>
      <button><svg class="ico"><use href="#s-rar"/></svg>Add to archive...</button>
      <button><svg class="ico"><use href="#s-rar"/></svg>Add to "profile.rar"</button>
      <button><svg class="ico"><use href="#s-rar"/></svg>Compress and email...</button>
      <button><svg class="ico"><use href="#s-rar"/></svg>Compress to "profile.rar" and email</button>
      <button><span class="slot"></span>Restore previous versions</button>
      <hr>
      <button><span class="slot"></span>Send to<svg class="sub"><use href="#s-sub"/></svg></button>
      <hr>
      <button><span class="slot"></span>Cut</button>
      <button><span class="slot"></span>Copy</button>
      <hr>
      <button><span class="slot"></span>Create shortcut</button>
      <button><span class="slot"></span>Delete</button>
      <button><span class="slot"></span>Rename</button>
      <hr>
      <button><span class="slot"></span>Properties</button>
      <!-- pen circle around Properties -->
      <svg class="scribble" viewBox="0 0 212 32"><path d="M51 2L91 3l34 1 30 2 21 3 22 2 10 4 2 3-4 5-11 4-25 3h-49l-20 1H51l-30-3-16-4-3-4 1-5 5-9 5-3h13l7 1 32 2 8 1"/></svg>
    </div>
  </main>

  <footer class="taskbar">
    <button class="start" aria-label="Start"><svg viewBox="0 0 16 16"><path d="M0 2.300L6.500 1.400v6.100H0zM7.500 1.200L16 0v7.500H7.500zM0 8.500h6.500v6.100L0 13.700zM7.500 8.500H16V16l-8.500-1.200z" fill="#fff"/></svg></button>
    <div class="cortana">
      <svg class="ring" viewBox="0 0 22 22"><circle cx="11" cy="11" r="9" fill="#222" stroke="#fff" stroke-width="2.500"/></svg>
      <input type="text" aria-label="Search" placeholder="Type here to search">
      <svg class="mic" viewBox="0 0 12 18"><path d="M3.500 1.500h5v9h-5zM1.500 9v4.500h9V9M6 13.500v3M3 16.500h6" fill="none" stroke="#aaa"/></svg>
    </div>
    <button class="taskview" aria-label="Task view"><svg viewBox="0 0 20 16"><path d="M4.500.5h11v15h-11zM3 3.500H.5v9H3M17 3.500h2.500v9H17" fill="none" stroke="#fff" stroke-width="1.200"/></svg></button>
    <button class="task task-on" aria-label="File Explorer"><svg viewBox="0 0 24 24"><path d="M1 4h7l2 2h13v15H1z" fill="#f7dd83"/><path d="M2 2h6v3H2z" fill="#f2c94e"/><path d="M5 12h14v9h-4v-5H9v5H5z" fill="#38a9e0"/></svg></button>
    <button class="task task-run" aria-label="Chrome"><svg><use href="#chrome"/></svg></button>
    <button class="task task-run" aria-label="Steam"><svg><use href="#steam"/></svg></button>
    <button class="task task-run" aria-label="Discord"><svg><use href="#discord"/></svg></button>
    <button class="task" aria-label="Logitech"><svg><use href="#logitech"/></svg></button>
    <button class="task task-run" aria-label="Skype"><svg viewBox="0 0 32 32"><use href="#skype-cloud"/><text x="15" y="24" class="logo-text" font-size="24" fill="#fff" text-anchor="middle">S</text></svg><span class="note">1</span></button>
    <div class="tray">
      <svg class="tray-up" viewBox="0 0 12 8"><path d="M1 7l5-5 5 5" fill="none" stroke="#fff" stroke-width="1.300"/></svg>
      <svg class="ico"><use href="#steam"/></svg>
      <svg class="ico" viewBox="0 0 16 16"><path d="M2 15A13 13 0 0 1 15 3M5 15A10 10 0 0 1 15 6M8 15a7 7 0 0 1 7-6M11 15a4 4 0 0 1 4-3" fill="none" stroke="#ddd" stroke-width="1.200"/><circle cx="13.500" cy="14" r="1.500" fill="#fff"/></svg>
      <div class="clock">10:40 AM<br>6/22/2017</div>
      <button class="action" aria-label="Notifications"><svg viewBox="0 0 16 16"><path d="M0 0h16v13h-5l-3 3v-3H0z" fill="#fff"/><path d="M3 3.500h10M3 6.500h10M3 9.500h7" stroke="#000"/></svg><span class="count-badge">10</span></button>
      <div class="show-desktop"></div>
    </div>
  </footer>
</body>

</html>
```
FILE: styles.css
```
* {
  box-sizing: border-box;
}

body {
  margin: 0;
  height: 100vh;
  display: flex;
  flex-direction: column;
  overflow: hidden;
  background: #000;
  color: #000;
  font-family: "Open Sans", "Noto Sans", sans-serif;
  font-size: 11px;
  line-height: 15px;
}

a {
  color: inherit;
  text-decoration: none;
}

button {
  margin: 0;
  padding: 0;
  border: 0;
  background: none;
  color: inherit;
  font: inherit;
}

input {
  min-width: 0;
  border: 0;
  background: none;
  font: inherit;
  outline: none;
}

svg {
  display: block;
  flex: none;
}

.sprites {
  position: absolute;
}

.ico {
  width: 16px;
  height: 16px;
}

.logo-text {
  font-family: "Liberation Sans", sans-serif;
  font-weight: bold;
}

.narrow-text {
  font-family: "Liberation Sans Narrow", "Liberation Sans", sans-serif;
  font-weight: bold;
}

.mono-text {
  font-family: "Liberation Mono", monospace;
}

/* desktop */
.desktop {
  position: relative;
  flex: 1;
  min-height: 0;
  display: flex;
  justify-content: space-between;
}

.shortcuts {
  display: flex;
  flex-direction: column;
}

.shortcuts-right {
  padding: 0 20px 8px 0;
}

.shortcut-row {
  display: flex;
  height: 86px;
}

.shortcuts-right .shortcut-row {
  justify-content: flex-end;
}

.last-row {
  margin-top: auto;
}

.shortcut {
  width: 76px;
  padding-top: 7px;
  color: #fff;
  text-align: center;
  white-space: nowrap;
}

.shortcut svg {
  width: 32px;
  height: 32px;
  margin: 0 auto 3px;
}

.streak {
  position: absolute;
  left: 382px;
  top: 615px;
  width: 36px;
  height: 18px;
}

/* explorer window */
.window {
  position: absolute;
  left: 417px;
  right: 316px;
  top: 175px;
  bottom: 205px;
  display: flex;
  flex-direction: column;
  border: 1px solid #3c7a40;
  background: #fff;
}

.titlebar {
  display: flex;
  align-items: center;
  gap: 6px;
  height: 30px;
  padding-left: 9px;
}

.bar {
  width: 1px;
  height: 12px;
  margin-right: 3px;
  background: #888;
}

.title {
  margin-left: -2px;
  padding-bottom: 2px;
}

.quick-drop {
  width: 8px;
  height: 8px;
  margin-right: 2px;
}

.caption {
  display: flex;
  margin-left: auto;
}

.caption button {
  width: 46px;
  height: 30px;
  display: flex;
  align-items: center;
  justify-content: center;
}

.caption svg {
  width: 10px;
  height: 10px;
  fill: none;
  stroke: #000;
}

.ribbon {
  display: flex;
  align-items: center;
  height: 24px;
  padding-right: 4px;
  border-bottom: 1px solid #dcdcdc;
}

.tab {
  height: 23px;
  padding: 0 14px;
  color: #444;
}

.tab-file {
  width: 56px;
  background: #1979ca;
  color: #fff;
}

.ribbon-drop {
  width: 10px;
  height: 10px;
  margin: 0 10px 0 auto;
}

.help {
  width: 14px;
  height: 14px;
  border-radius: 50%;
  background: #0b72d0;
  color: #fff;
  font-weight: bold;
  line-height: 14px;
}

.address-row {
  display: flex;
  align-items: center;
  gap: 4px;
  height: 35px;
  padding: 0 12px 0 6px;
}

.go {
  width: 26px;
  display: flex;
  justify-content: center;
  color: #666;
}

.go-off {
  color: #d3d3d3;
}

.go-small {
  width: 12px;
}

.go-up {
  width: 20px;
}

.flip {
  transform: rotate(180deg);
}

.up {
  transform: rotate(90deg);
}

.up-vee {
  transform: rotate(180deg);
}

.address {
  flex: 1;
  display: flex;
  align-items: center;
  height: 22px;
  padding-left: 3px;
  border: 1px solid #d9d9d9;
}

.address a {
  padding-bottom: 2px;
}

.chev {
  width: 25px;
  height: 16px;
}

.address > .ico {
  margin-right: -5px;
}

.addr-drop {
  margin-left: auto;
  color: #555;
}

.refresh {
  height: 20px;
  margin-left: 1px;
  padding: 2px;
  border-left: 1px solid #d9d9d9;
}

.search {
  width: 202px;
  height: 22px;
  display: flex;
  align-items: center;
  margin-left: 8px;
  padding: 0 6px 0 8px;
  border: 1px solid #d9d9d9;
}

.search input {
  flex: 1;
  padding: 0 0 2px;
}

.search input::placeholder {
  color: #6d6d6d;
}

.panes {
  flex: 1;
  min-height: 0;
  display: flex;
}

.tree {
  width: 139px;
  padding-top: 16px;
  overflow: hidden;
}

.tree a {
  display: flex;
  align-items: center;
  gap: 5px;
  height: 24px;
  padding: 0 0 2px 32px;
  white-space: nowrap;
}

.tree .root {
  padding-left: 24px;
}

.tree .spaced {
  margin-top: 8px;
}

.tree .current {
  background: #d9d9d9;
}

.pin {
  width: 16px;
  height: 16px;
  margin: 0 1px 0 auto;
}

.scrollbar {
  width: 17px;
  display: flex;
  flex-direction: column;
  align-items: center;
  background: #f0f0f0;
  color: #505050;
}

.thumb {
  width: 15px;
  height: 465px;
  margin-bottom: auto;
  background: #cdcdcd;
}

.files {
  flex: 1;
  margin-left: 2px;
  padding-left: 15px;
  border-left: 1px solid #eee;
}

.files table {
  width: 578px;
  table-layout: fixed;
  border-collapse: separate;
  border-spacing: 0;
}

.col-name {
  width: 258px;
}

.col-date,
.col-type {
  width: 120px;
}

.col-size {
  width: 80px;
}

th {
  position: relative;
  height: 26px;
  padding: 0 0 2px 6px;
  border-right: 1px solid #e5e5e5;
  color: #4c607a;
  font-weight: normal;
  text-align: left;
}

th:first-child {
  padding-left: 3px;
}

.sort {
  position: absolute;
  left: 48%;
  top: 0;
  width: 10px;
  height: 6px;
}

thead::after {
  content: "";
  display: block;
  height: 5px;
}

td {
  height: 21px;
  padding: 0 6px;
  border: solid transparent;
  border-width: 1px 0;
  color: #6d6d6d;
  white-space: nowrap;
}

td:first-child {
  display: flex;
  align-items: center;
  gap: 4px;
  padding: 0 0 0 4px;
  color: #000;
}

td:last-child {
  padding-right: 5px;
  border-right: 3px solid transparent;
  background-clip: padding-box;
  text-align: right;
}

.selected td {
  border-top-color: #99d1ff;
  border-bottom-color: #99d1ff;
  background-color: #cce8ff;
}

.status {
  display: flex;
  align-items: center;
  gap: 6px;
  height: 23px;
  padding: 0 5px 0 14px;
  color: #1e395b;
}

.count {
  margin-right: 15px;
}

.views {
  display: flex;
  margin-left: auto;
}

.view {
  width: 20px;
  height: 22px;
  display: flex;
  align-items: center;
  justify-content: center;
}

.view-on {
  width: 22px;
  border: 1px solid #4ba0c8;
  background: #cde8f4;
}

/* context menu */
.menu {
  position: absolute;
  left: 679px;
  top: 301px;
  width: 299px;
  padding: 4px 10px;
  border: 1px solid #a0a0a0;
  background: #f1f1f1;
  box-shadow: 3px 3px 3px rgba(0, 0, 0, 0.5);
}

.menu button {
  width: 100%;
  height: 22px;
  display: flex;
  align-items: center;
  gap: 8px;
  padding-bottom: 2px;
  text-align: left;
  white-space: nowrap;
}

.menu hr {
  margin: 3px 0;
  border: 0;
  border-top: 1px solid #919191;
}

.slot {
  width: 16px;
}

.sub {
  width: 16px;
  height: 16px;
  margin: 0 -4px 0 auto;
}

.scribble {
  position: absolute;
  left: 2px;
  bottom: -5px;
  width: 212px;
  height: 32px;
  fill: none;
  stroke: #000;
}

/* taskbar */
.taskbar {
  display: flex;
  align-items: center;
  height: 40px;
  color: #fff;
}

.taskbar button {
  height: 40px;
  display: flex;
  align-items: center;
  justify-content: center;
}

.start {
  width: 48px;
}

.start svg {
  width: 16px;
  height: 16px;
}

.cortana {
  width: 344px;
  height: 40px;
  display: flex;
  align-items: center;
  gap: 5px;
  padding: 0 14px 0 9px;
  background: #333;
}

.cortana input {
  flex: 1;
  padding: 0;
  font-size: 14px;
}

.cortana input::placeholder {
  color: #a0a0a0;
}

.ring {
  width: 22px;
  height: 22px;
}

.mic {
  width: 12px;
  height: 18px;
}

.taskbar .taskview {
  width: 48px;
  margin-right: 2px;
}

.taskview svg {
  width: 20px;
  height: 16px;
}

.taskbar .task {
  position: relative;
  width: 48px;
  margin-left: 1px;
}

.task svg {
  width: 24px;
  height: 24px;
}

.task-on {
  background: #333;
  box-shadow: inset 0 -2px #6cb86a;
}

.task-run::after {
  content: "";
  position: absolute;
  left: 4px;
  right: 4px;
  bottom: 0;
  height: 2px;
  background: #6cb86a;
}

.note {
  position: absolute;
  right: 8px;
  bottom: 6px;
  width: 12px;
  height: 12px;
  border-radius: 50%;
  background: #f5a623;
  color: #222;
  font-size: 9px;
  font-weight: bold;
  line-height: 12px;
}

.tray {
  display: flex;
  align-items: center;
  margin-left: auto;
  gap: 6px;
}

.tray-up {
  width: 12px;
  height: 8px;
  margin-right: 6px;
}

.clock {
  width: 60px;
  line-height: 18px;
  text-align: center;
}

.taskbar .action {
  position: relative;
  width: 32px;
  margin-right: 6px;
}

.action svg {
  width: 16px;
  height: 16px;
}

.count-badge {
  position: absolute;
  right: 0;
  bottom: 4px;
  width: 18px;
  height: 18px;
  border-radius: 50%;
  background: #333;
  border: 1px solid #777;
  line-height: 16px;
}

.show-desktop {
  width: 5px;
  height: 40px;
  border-left: 1px solid #555;
}
```
